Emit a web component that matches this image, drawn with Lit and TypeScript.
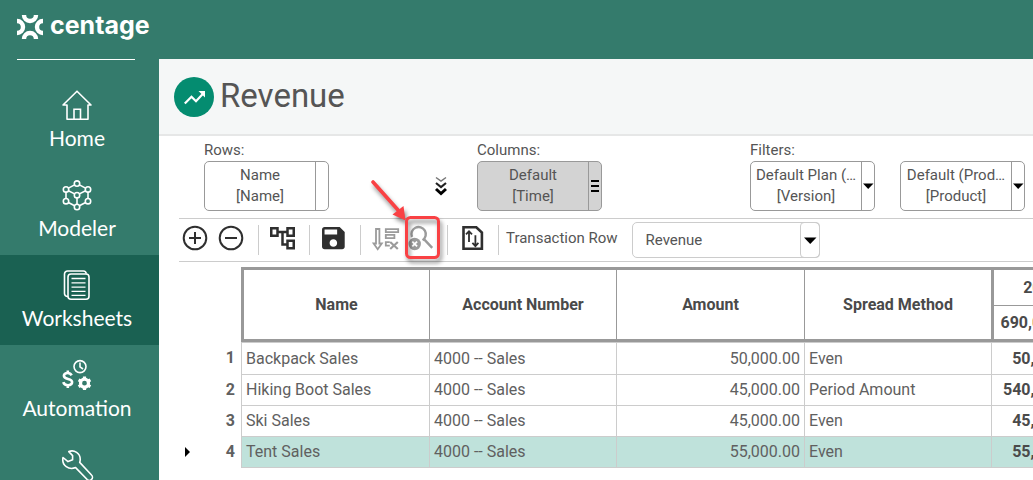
import { LitElement, html, svg, css, nothing } from "lit";
import { customElement, property } from "lit/decorators.js";
import { classMap } from "lit/directives/class-map.js";

const icons = {
  home: svg`<path d="M3 15 1 15 15 1.2 29 15 26 15 26 29.2 5 29.2 5 15Z" stroke-linejoin="round"/><path d="M12 29V19.2h6.5V29"/>`,
  modeler: svg`<circle cx="15" cy="3.6" r="2.7"/><circle cx="4" cy="9.4" r="2.7"/><circle cx="26" cy="9.4" r="2.7"/><circle cx="15" cy="15.2" r="2.7"/><circle cx="4" cy="21.2" r="2.7"/><circle cx="26" cy="21.2" r="2.7"/><circle cx="15" cy="27" r="2.7"/><path d="M12.6 4.9 6.4 8.1M17.4 4.9l6.2 3.2M4 12.1v6.4M26 12.1v6.4M6.4 22.5l6.2 3.2M23.6 22.5l-6.2 3.2M6.4 10.7l6.2 3.2M23.6 10.7l-6.2 3.2M15 17.9v6.4"/>`,
  worksheets: svg`<rect x="6" y="4" width="21" height="25.3" rx="3"/><path d="M6 26.5h-.5a3 3 0 0 1-3-3V4a3 3 0 0 1 3-3h16a3 3 0 0 1 2.8 2.6"/><path d="M9.5 8.5h14M9.5 12.8h14M9.5 17.1h14M9.5 21.4h14M9.5 25.4h14" stroke-width="1.3"/>`,
  automation: svg`<circle cx="18" cy="6.6" r="6"/><path d="M18 2.6v4.2l3 2.2"/><path d="M9.6 15.4C8.8 13.6 7.4 13 5.6 13 3.400 13 1.900 14 1.900 15.800c0 4.200 8.200 2.200 8.200 6.300 0 1.900-1.700 3.100-4.200 3.100-2.200 0-4-.9-4.600-3M5.800 10.500V13M5.800 25v3" stroke-width="2.6"/><circle cx="22.500" cy="23.200" r="4" stroke-width="3.200"/><path d="M22.500 16.400v2.500M22.500 27.500v2.500M16.600 19.800l2.200 1.200M26.200 25.400l2.200 1.200M28.400 19.800l-2.200 1.200M18.800 25.400l-2.200 1.200" stroke-width="3.200"/>`,
  tools: svg`<path d="M1 7.500 6 11.600 10.600 9.800 10.600 5.600 6.800 1.600C12 -.6 18.600 3.200 18.200 9.800c0 1-.2 1.800-.5 2.600L29.500 25a3 3 0 0 1-4.300 4.500L13.600 17.600C7 20.300-.6 15.600 1 7.500Z" stroke-linejoin="round"/>`,
  add: svg`<circle cx="16" cy="16" r="11.300"/><path d="M10 16h12M16 10v12"/>`,
  remove: svg`<circle cx="16" cy="16" r="11.300"/><path d="M10 16h12"/>`,
  tree: svg`<path class="solid" transform="translate(1.500 1.250) scale(1.250)" d="M22 11V3h-7v3H9V3H2v8h7V8h2v10h4v3h7v-8h-7v3h-2V8h2v3h7zM7 9H4V5h3v4zm10 6h3v4h-3v-4zm0-10h3v4h-3V5z"/>`,
  save: svg`<path class="solid" transform="translate(1.250 1.250) scale(1.260 1.240)" d="M17 3H5c-1.110 0-2 .9-2 2v14c0 1.100.890 2 2 2h14c1.100 0 2-.9 2-2V7l-4-4zm-5 16c-1.660 0-3-1.340-3-3s1.340-3 3-3 3 1.340 3 3-1.340 3-3 3zm3-10H5V5h10v4z"/>`,
  unsort: svg`<g stroke-width="1.800"><path d="M8 7h3.400v14.500h2.400L9.700 27.200l-4.100-5.700H8Z"/><path d="M17.800 7.200h12.400v2.900H17.800ZM17.800 12.800h8.600v3.300h-8.600ZM21.800 20.200h-4v3.400h4"/><path d="m22.200 20 7.600 7M29.800 20l-7.600 7" stroke-width="2.200"/></g>`,
  unfilter: svg`<path d="M8 15A7.200 7.200 0 1 1 18.600 18.200M20.200 17.400l8 8.400" stroke-width="2.400"/><circle class="solid" cx="10.700" cy="22" r="6.200"/><path class="cut" d="m8.300 19.600 4.800 4.800M13.100 19.600l-4.800 4.800"/>`,
  importFile: svg`<path d="M8.500 5.200h12.800l5.600 5.400v16.200H8.500Z" stroke-width="2.600"/><path d="M14 20V9.500M11 12.400l3-3.200 3 3.200M20.400 13.200v10.500M17.400 20.900l3 3.200 3-3.200" stroke-width="1.800"/>`,
};
type IconName = keyof typeof icons;

@customElement("side-item")
class SideItem extends LitElement {
  static styles = css`
    :host { display: block; }
    .item { display: flex; flex-direction: column; align-items: center; gap: 6px; min-height: 90px; box-sizing: border-box; padding: 15px 5px 0 0; color: #fff; text-decoration: none; font: 21px/24px Lato, "Liberation Sans", sans-serif; }
    .active { background: #1a6152; }
    .icon { width: 30px; height: 30px; fill: none; stroke: #fff; stroke-width: 1.6; flex: none; overflow: visible; }
  `;
  @property() label = "";
  @property() icon: IconName = "home";
  @property({ type: Boolean }) active = false;
  render() {
    return html`<a class=${classMap({ item: true, active: this.active })} href="#" aria-label=${this.label || "Tools"}>
      <svg class="icon" viewBox="0 0 30 30" aria-hidden="true">${icons[this.icon]}</svg>
      ${this.label ? html`<span>${this.label}</span>` : nothing}
    </a>`;
  }
}

@customElement("tool-button")
class ToolButton extends LitElement {
  static styles = css`
    :host { display: block; flex: none; }
    .tool { display: block; width: 32px; height: 32px; padding: 0; border: 0; background: none; color: #2f2f2f; }
    .muted { color: #9b9b9b; }
    .icon { display: block; width: 32px; height: 32px; fill: none; stroke: currentColor; stroke-width: 2; }
    .solid { fill: currentColor; stroke: none; }
    .cut { stroke: #fff; stroke-width: 1.8; }
  `;
  @property() label = "";
  @property() icon: IconName = "add";
  @property({ type: Boolean }) muted = false;
  render() {
    return html`<button class=${classMap({ tool: true, muted: this.muted })} aria-label=${this.label}>
      <svg class="icon" viewBox="0 0 32 32" aria-hidden="true">${icons[this.icon]}</svg>
    </button>`;
  }
}

@customElement("dimension-box")
class DimensionBox extends LitElement {
  static styles = css`
    :host { display: block; flex: none; }
    .box { display: flex; box-sizing: border-box; width: 125px; height: 50px; border: 1px solid #999; border-radius: 5px; overflow: hidden; background: #fff; }
    .filled { background: #d3d3d3; }
    .main, .side { border: 0; padding: 0; background: none; color: #555; font: 15px/21px Roboto, "Liberation Sans", sans-serif; }
    .main { flex: 1; min-width: 0; white-space: nowrap; }
    .line { display: block; }
    .side { display: grid; place-items: center; width: 13px; border-left: 1px solid #999; overflow: hidden; }
    .glyph { display: block; width: 12px; height: 14px; fill: #000; }
  `;
  @property() name = "";
  @property() dimension = "";
  @property() kind: "plain" | "menu" | "drop" = "plain";
  render() {
    const glyph =
      this.kind === "menu" ? svg`<path d="M2 1h8v2H2zM2 6h8v2H2zM2 11h8v2H2z"/>`
      : this.kind === "drop" ? svg`<path d="M1 4.500h10.500L6.200 10z"/>` : nothing;
    return html`<div class=${classMap({ box: true, filled: this.kind === "menu" })}>
      <button class="main"><span class="line">${this.name}</span><span class="line">[${this.dimension}]</span></button>
      <button class="side" aria-label="${this.dimension} options"><svg class="glyph" viewBox="0 0 12 14" aria-hidden="true">${glyph}</svg></button>
    </div>`;
  }
}

const rows = [
  { name: "Backpack Sales", amount: "50,000.00", spread: "Even", total: "50,000.00" },
  { name: "Hiking Boot Sales", amount: "45,000.00", spread: "Period Amount", total: "540,000.00" },
  { name: "Ski Sales", amount: "45,000.00", spread: "Even", total: "45,000.00" },
  { name: "Tent Sales", amount: "55,000.00", spread: "Even", total: "55,000.00", current: true },
];

@customElement("app-root")
class AppRoot extends LitElement {
  static styles = css`
    :host { display: grid; grid-template: 59px minmax(0, 1fr) / 159px minmax(0, 1fr); height: 100vh; overflow: hidden; background: #fff; color: #555; font: 15px/20px Roboto, "Liberation Sans", sans-serif; }
    .top { grid-column: 1 / -1; background: #347b6c; padding: 11px 17px 0; }
    .brand { display: flex; align-items: flex-start; gap: 7px; color: #fff; text-decoration: none; font: 700 25px/28px Inter, "Liberation Sans", sans-serif; }
    .logo { width: 26px; height: 24px; margin-top: 4px; fill: none; stroke: #fff; stroke-width: 4.4; }
    .side { background: #347b6c; overflow: hidden; }
    .rule { height: 1px; margin: 0 24px 15px 17px; border: 0; background: #fff; }
    .main { min-width: 0; overflow: hidden; }
    .head { display: flex; align-items: center; gap: 6px; height: 75px; padding-left: 15px; background: #f5f7f7; border-bottom: 2px solid #e6e7e7; }
    .badge { width: 40px; height: 40px; flex: none; }
    .title { margin: 0; padding-bottom: 2px; color: #555; font: 400 33px/40px Roboto, "Liberation Sans", sans-serif; }
    .dims { display: grid; grid-template-columns: repeat(3, minmax(0, 1fr)); padding: 4px 10px 7px 45px; }
    .caption { margin: 0 0 1px; }
    .boxes { display: flex; gap: 25px; align-items: center; }
    .expand { margin: 0 29px 0 auto; padding: 0; border: 0; background: none; }
    .chevrons { display: block; width: 14px; height: 20px; fill: none; }
    .tools { display: flex; align-items: flex-start; gap: 4px; margin-left: 20px; padding: 3px 0; border: solid #ccc; border-width: 1px 0; }
    .sep { flex: none; width: 1px; height: 30px; margin: 3px 3px 0 7px; background: #ccc; }
    .marked { position: relative; }
    .callout { position: absolute; left: -34px; top: -48px; width: 76px; height: 92px; overflow: visible; pointer-events: none; filter: drop-shadow(2px 4px 2px rgba(0, 0, 0, 0.45)); }
    .label { line-height: 32px; white-space: nowrap; }
    .combo { position: relative; flex: none; width: 188px; height: 36px; margin-left: 10px; }
    .pick { appearance: none; box-sizing: border-box; width: 100%; height: 100%; padding: 0 32px 0 13px; border: 1px solid #ccc; border-radius: 5px; background: #fff; color: #555; font: inherit; }
    .drop { position: absolute; right: 0; top: 0; box-sizing: border-box; width: 20px; height: 36px; border: 1px solid #ccc; border-radius: 4px; pointer-events: none; }
    .grid { width: 910px; margin: 5px 0 0 20px; table-layout: fixed; border-collapse: separate; border-spacing: 0; font-size: 16px; }
    .c-mark { width: 62px; }
    .c-even { width: 188px; }
    .c-odd { width: 187px; }
    .h { box-sizing: border-box; padding: 0; border: solid #999; border-width: 3px 0 3px 1px; color: #4a4a4a; font-weight: 700; }
    .h-first { border-left-width: 3px; }
    .h-year { height: 39px; border-width: 3px 0 1px 3px; }
    .h-sum { height: 36px; border-width: 0 0 3px 3px; }
    .cell, .num { box-sizing: border-box; height: 31px; padding: 0 4px; white-space: nowrap; color: #606060; }
    .cell { border: solid #ccc; border-width: 0 0 1px 1px; }
    .first .cell { height: 33px; border-top-width: 1px; }
    .right { text-align: right; }
    .total { color: #4a4a4a; font-weight: 700; text-align: right; }
    .current .cell { background: #bfe2db; }
    .num { padding: 0 6px 2px; }
    .numrow { display: flex; align-items: center; justify-content: flex-end; }
    .cursor { width: 5px; height: 10px; margin-right: auto; fill: #000; }
  `;

  render() {
    return html`
      <header class="top">
        <a class="brand" href="#">
          <svg class="logo" viewBox="0 0 26 24" aria-hidden="true"><circle cx="13" cy="0" r="6"/><circle cx="13" cy="24" r="6"/><circle cx="0" cy="12" r="6"/><circle cx="26" cy="12" r="6"/></svg>
          <span>centage</span>
        </a>
      </header>
      <nav class="side">
        <hr class="rule" />
        <side-item label="Home" icon="home"></side-item>
        <side-item label="Modeler" icon="modeler"></side-item>
        <side-item label="Worksheets" icon="worksheets" active></side-item>
        <side-item label="Automation" icon="automation"></side-item>
        <side-item icon="tools"></side-item>
      </nav>
      <main class="main">
        <div class="head">
          <svg class="badge" viewBox="0 0 40 40" aria-hidden="true"><circle cx="20" cy="20" r="20" fill="#048c70"/><path d="M10.800 26.500 17.500 19.700 22 24.200 29.200 16.500" fill="none" stroke="#fff" stroke-width="2.200"/><path d="M24.500 14h6.500v6.500z" fill="#fff"/></svg>
          <h1 class="title">Revenue</h1>
        </div>
        <section class="dims">
          <div>
            <p class="caption">Rows:</p>
            <div class="boxes">
              <dimension-box name="Name" dimension="Name"></dimension-box>
              <button class="expand" aria-label="Expand">
                <svg class="chevrons" viewBox="0 0 14 20" aria-hidden="true"><path d="M2 1.500 7 5l5-3.500" stroke="#777" stroke-width="1.500"/><path d="M2 7 7 11l5-4" stroke="#222" stroke-width="2.200"/><path d="M2 13 7 17.500l5-4.500" stroke="#000" stroke-width="3"/></svg>
              </button>
            </div>
          </div>
          <div>
            <p class="caption">Columns:</p>
            <div class="boxes"><dimension-box name="Default" dimension="Time" kind="menu"></dimension-box></div>
          </div>
          <div>
            <p class="caption">Filters:</p>
            <div class="boxes">
              <dimension-box name="Default Plan (…" dimension="Version" kind="drop"></dimension-box>
              <dimension-box name="Default (Prod…" dimension="Product" kind="drop"></dimension-box>
            </div>
          </div>
        </section>
        <div class="tools">
          <tool-button icon="add" label="Add row"></tool-button>
          <tool-button icon="remove" label="Remove row"></tool-button>
          <span class="sep"></span>
          <tool-button icon="tree" label="Hierarchy"></tool-button>
          <span class="sep"></span>
          <tool-button icon="save" label="Save"></tool-button>
          <span class="sep"></span>
          <tool-button icon="unsort" label="Clear sort" muted></tool-button>
          <div class="marked">
            <tool-button icon="unfilter" label="Clear filter" muted></tool-button>
            <svg class="callout" viewBox="0 0 76 92" aria-hidden="true"><rect x="36.500" y="43.500" width="32" height="40" rx="4" fill="none" stroke="#f94144" stroke-width="3"/><path d="M3 8 28 36" stroke="#f94144" stroke-width="3.600" stroke-linecap="round"/><path d="M35.500 46.500 22.500 40.500 33.500 32z" fill="#f94144"/></svg>
          </div>
          <span class="sep"></span>
          <tool-button icon="importFile" label="Import and export"></tool-button>
          <span class="sep"></span>
          <label class="label" for="txn">Transaction Row</label>
          <div class="combo">
            <select class="pick" id="txn"><option>Revenue</option></select>
            <svg class="drop" viewBox="0 0 18 34" aria-hidden="true"><path d="M3 14.500h12.500L9.200 21z"/></svg>
          </div>
        </div>
        <table class="grid">
          <colgroup><col class="c-mark" /><col class="c-even" /><col class="c-odd" /><col class="c-even" /><col class="c-odd" /><col /></colgroup>
          <thead>
            <tr>
              <td rowspan="2"></td>
              <th class="h h-first" rowspan="2" scope="col">Name</th>
              <th class="h" rowspan="2" scope="col">Account Number</th>
              <th class="h" rowspan="2" scope="col">Amount</th>
              <th class="h" rowspan="2" scope="col">Spread Method</th>
              <th class="h h-year" scope="col">2023</th>
            </tr>
            <tr><th class="h h-sum" scope="col">690,000.00</th></tr>
          </thead>
          <tbody>
            ${rows.map((r, i) => html`<tr class=${classMap({ first: i === 0, current: !!r.current })}>
              <th class="num" scope="row"><div class="numrow">
                ${r.current ? html`<svg class="cursor" viewBox="0 0 5 10" aria-hidden="true"><path d="M0 0 5 5 0 10z"/></svg>` : nothing}
                ${i + 1}
              </div></th>
              <td class="cell">${r.name}</td>
              <td class="cell">4000 -- Sales</td>
              <td class="cell right">${r.amount}</td>
              <td class="cell">${r.spread}</td>
              <td class="cell total">${r.total}</td>
            </tr>`)}
          </tbody>
        </table>
      </main>
    `;
  }
}
